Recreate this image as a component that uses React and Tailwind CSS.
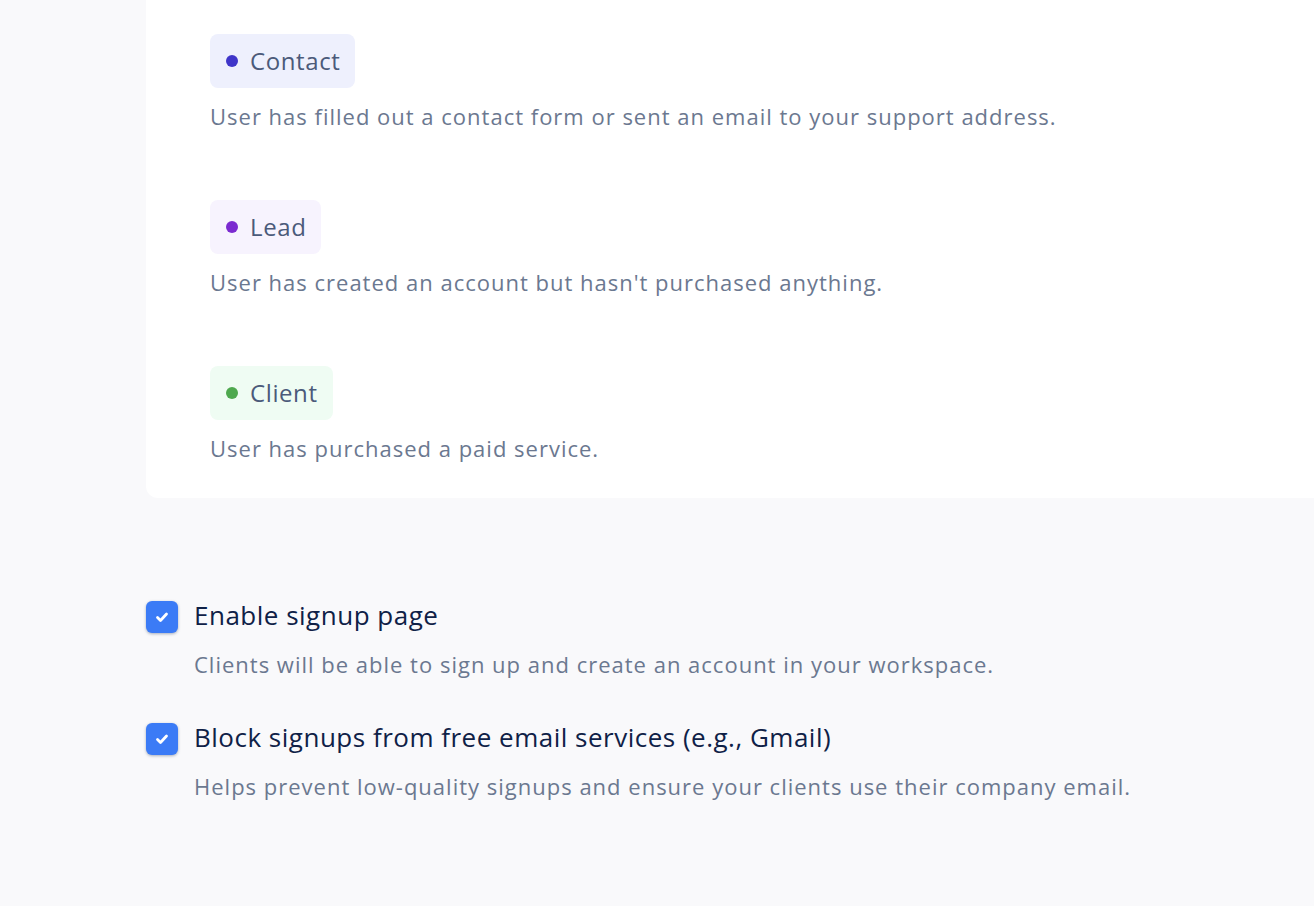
import React from 'react';

const stages = [
  {
    label: 'Contact',
    badge: 'bg-[#eef0fd]',
    dot: 'bg-[#3f35c9]',
    text: 'User has filled out a contact form or sent an email to your support address.',
  },
  {
    label: 'Lead',
    badge: 'bg-[#f7f3fe]',
    dot: 'bg-[#7b2ad0]',
    text: "User has created an account but hasn't purchased anything.",
  },
  {
    label: 'Client',
    badge: 'bg-[#effcf3]',
    dot: 'bg-[#4ea84e]',
    text: 'User has purchased a paid service.',
  },
];

const options = [
  {
    title: 'Enable signup page',
    text: 'Clients will be able to sign up and create an account in your workspace.',
  },
  {
    title: 'Block signups from free email services (e.g., Gmail)',
    text: 'Helps prevent low-quality signups and ensure your clients use their company email.',
  },
];

const Check = () => (
  <div className="w-8 h-8 shrink-0 rounded-md bg-[#3b7bf6] shadow-[0_1px_3px_rgba(15,33,71,0.35)] flex items-center justify-center">
    <svg width="16" height="16" viewBox="0 0 16 16" fill="none">
      <path d="M3.5 8.5l3 3 6-6.5" stroke="white" strokeWidth="2.8" strokeLinecap="round" strokeLinejoin="round" />
    </svg>
  </div>
);

export default function App() {
  return (
    <div className="min-h-screen bg-[#f9f9fb] font-['Open_Sans',sans-serif] overflow-hidden">
      {/* Stage card */}
      <div className="ml-[146px] bg-white rounded-bl-xl pl-16 pt-[34px] pb-[35px] flex flex-col gap-[69px]">
        {stages.map((s) => (
          <div key={s.label} className="flex flex-col items-start gap-[13px]">
            <div className={`${s.badge} rounded-lg pl-4 pr-[15px] py-3 flex items-center gap-3`}>
              <span className={`${s.dot} w-3 h-3 rounded-full`}></span>
              <span className="text-[24px] leading-[30px] tracking-[0.6px] text-[#4b5a7a]">{s.label}</span>
            </div>
            <p className="text-[22px] leading-[30px] tracking-[1px] text-[#6b7890]">{s.text}</p>
          </div>
        ))}
      </div>

      {/* Signup options */}
      <div className="ml-[146px] mt-[103px] flex flex-col gap-[44px]">
        {options.map((o) => (
          <div key={o.title} className="flex flex-col">
            <div className="flex items-center gap-4">
              <Check />
              <span className="text-[26px] leading-8 -translate-y-[2px] tracking-[0.5px] text-[#0f2147]">{o.title}</span>
            </div>
            <p className="ml-12 mt-4 text-[22px] leading-[30px] tracking-[1px] text-[#6b7890]">{o.text}</p>
          </div>
        ))}
      </div>
    </div>
  );
}
